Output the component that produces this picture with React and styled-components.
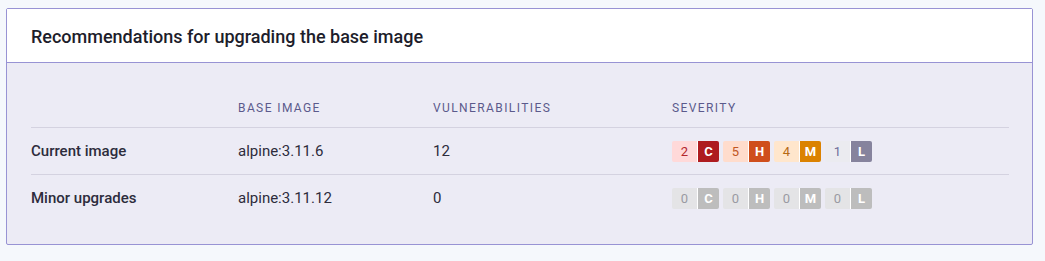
import React from 'react';
import styled, { createGlobalStyle } from 'styled-components';

const GlobalStyle = createGlobalStyle`
  body {
    margin: 0;
    background: #f5f8fc;
    font-family: Roboto, "Liberation Sans", sans-serif;
  }
`;

const Page = styled.div`
  padding: 8px 12px 16px 6px;
`;

const Card = styled.section`
  border: 1px solid #9893d4;
  border-radius: 2px;
  background: #ecebf5;
`;

const CardHeader = styled.header`
  background: #fff;
  border-bottom: 1px solid #9893d4;
  height: 53px;
  display: flex;
  align-items: center;
  padding: 0 24px;
`;

const Title = styled.h2`
  margin: 0;
  font-size: 18px;
  font-weight: 500;
  color: #1d1d2b;
  padding-top: 1px;
`;

const CardBody = styled.div`
  padding: 24px 23px 23px 24px;
`;

const Row = styled.div`
  display: grid;
  grid-template-columns: 207px 195px 239px 1fr;
  align-items: center;
  height: ${p => (p.$head ? '40px' : '46px')};
  border-bottom: ${p => (p.$last ? 'none' : '1px solid #d4d2e0')};
`;

const HeadCell = styled.div`
  font-size: 12px;
  letter-spacing: 1.4px;
  text-transform: uppercase;
  color: #5b5a8c;
  padding-top: 1px;
`;

const Cell = styled.div`
  font-size: 15px;
  color: #2d2c3c;
  font-weight: ${p => (p.$bold ? 500 : 400)};
`;

const Badges = styled.div`
  display: flex;
  gap: 4px;
`;

const Badge = styled.div`
  display: flex;
  height: 21px;
  border-radius: 2px;
  overflow: hidden;
`;

const Count = styled.span`
  width: 25px;
  display: flex;
  align-items: center;
  justify-content: center;
  font-size: 13px;
  background: ${p => p.$bg};
  color: ${p => p.$fg};
`;

const Letter = styled.span`
  width: 21px;
  display: flex;
  align-items: center;
  justify-content: center;
  font-size: 13px;
  font-weight: 700;
  color: #fff;
  background: ${p => p.$bg};
  border-left: 1px solid #fff;
`;

const palette = {
  C: { soft: '#ffd9d9', text: '#b3262b', strong: '#ae1b1f' },
  H: { soft: '#ffdccc', text: '#c2561f', strong: '#cf4e1c' },
  M: { soft: '#ffe6cc', text: '#b66a14', strong: '#db8200' },
  L: { soft: '#ebebf0', text: '#6f6d9a', strong: '#86839d' },
};

const muted = { soft: '#e4e4e6', text: '#9a9aa2', strong: '#bdbdbd' };

function Severity({ counts }) {
  return (
    <Badges>
      {['C', 'H', 'M', 'L'].map((key, i) => {
        const c = counts[i] > 0 ? palette[key] : muted;
        return (
          <Badge key={key}>
            <Count $bg={c.soft} $fg={c.text}>{counts[i]}</Count>
            <Letter $bg={c.strong}>{key}</Letter>
          </Badge>
        );
      })}
    </Badges>
  );
}

const rows = [
  { label: 'Current image', image: 'alpine:3.11.6', vulns: 12, counts: [2, 5, 4, 1] },
  { label: 'Minor upgrades', image: 'alpine:3.11.12', vulns: 0, counts: [0, 0, 0, 0] },
];

export default function App() {
  return (
    <Page>
      <GlobalStyle />
      <Card>
        <CardHeader>
          <Title>Recommendations for upgrading the base image</Title>
        </CardHeader>
        <CardBody>
          <Row $head>
            <HeadCell />
            <HeadCell>Base image</HeadCell>
            <HeadCell>Vulnerabilities</HeadCell>
            <HeadCell>Severity</HeadCell>
          </Row>
          {rows.map((r, i) => (
            <Row key={r.label} $last={i === rows.length - 1}>
              <Cell $bold>{r.label}</Cell>
              <Cell>{r.image}</Cell>
              <Cell>{r.vulns}</Cell>
              <Severity counts={r.counts} />
            </Row>
          ))}
        </CardBody>
      </Card>
    </Page>
  );
}
